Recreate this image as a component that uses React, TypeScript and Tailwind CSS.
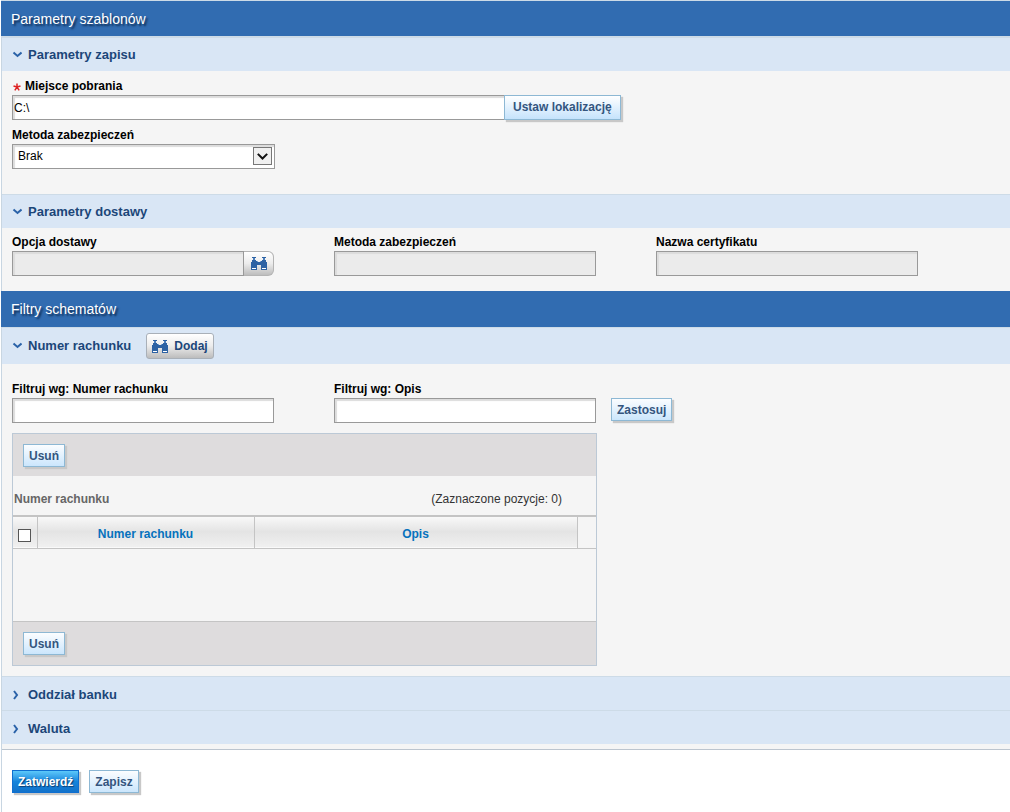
import { useState } from "react";
import type { ReactNode } from "react";

const inputStyle =
  "block h-[25px] border border-[#999] px-px text-[12px] text-black outline-none shadow-[inset_2px_2px_1px_#dcdcdc]";

function Binoculars() {
  return (
    <svg width="16" height="13" viewBox="0 0 16 13" shapeRendering="crispEdges" aria-hidden="true">
      <path fill="#2d62a3" d="M1 0h4v1H1zM11 0h4v1h-4z" />
      <path fill="#4a7dbb" d="M2 1h2v2H2zM12 1h2v2h-2z" />
      <path fill="#2d62a3" d="M1 3h4v1h1v1h4V4h1V3h4v2h1v8h-6V8H6v5H0V5h1z" />
      <path fill="#7ea6d4" d="M6 4h1v1H6zM9 4h1v1H9z" />
      <path fill="#fff" d="M1 11h4v1H1zM11 11h4v1h-4z" />
    </svg>
  );
}

function Chevron({ open }: { open: boolean }) {
  return (
    <svg width="10" height="10" viewBox="0 0 10 10" fill="none" stroke="#2a62a8" strokeWidth="2" aria-hidden="true">
      {open ? <path d="M1.500 2.500l4 3.500 4-3.500" /> : <path d="M2 1l3 4-3 4" />}
    </svg>
  );
}

function Title({ children }: { children: string }) {
  return (
    <h1 className="flex h-9 items-center bg-[#316cb1] pl-[10px] text-[14px] text-white [text-shadow:2px_2px_2px_#0c2a50]">
      {children}
    </h1>
  );
}

interface SectionBarProps {
  title: string;
  open: boolean;
  onToggle: () => void;
  children?: ReactNode;
}

function SectionBar({ title, open, onToggle, children }: SectionBarProps) {
  return (
    <div className="flex min-h-[34px] items-center gap-[15px] border-t border-[#cddbe7] bg-[#d9e6f5] pl-[10px]">
      <button
        type="button"
        aria-expanded={open}
        onClick={onToggle}
        className={`flex items-center gap-[6px] text-[13px] leading-4 font-bold text-[#1c4679] ${open ? "" : "pt-[3px]"}`}
      >
        <Chevron open={open} />
        {title}
      </button>
      {children}
    </div>
  );
}

function SmallButton({ children, primary }: { children: string; primary?: boolean }) {
  return (
    <button
      type="button"
      className={
        primary
          ? "h-[23px] border border-[#0f6fd0] bg-linear-to-b from-[#5cc8fa] via-[#1485dc] to-[#1272ca] px-[5px] pt-px text-[12px] font-bold text-white shadow-[2px_2px_1px_#c8c8c8] [text-shadow:1px_1px_1px_#0c3c70]"
          : "h-[23px] border border-[#8db8d4] bg-linear-to-b from-[#fbfdff] to-[#cbe6fc] px-[5px] pt-px text-[12px] font-bold text-[#34557e] shadow-[2px_2px_1px_#c8c8c8]"
      }
    >
      {children}
    </button>
  );
}

interface FieldProps {
  id: string;
  label: string;
  disabled?: boolean;
}

function Field({ id, label, disabled }: FieldProps) {
  return (
    <div className="w-[262px]">
      <label htmlFor={id} className="mb-px block">
        {label}
      </label>
      <input
        id={id}
        type="text"
        disabled={disabled}
        className={`${inputStyle} w-full ${disabled ? "bg-[#ebebeb]" : "bg-white"}`}
      />
    </div>
  );
}

function App() {
  const [location, setLocation] = useState("C:\\");
  const [open, setOpen] = useState({
    save: true,
    delivery: true,
    account: true,
    branch: false,
    currency: false,
  });

  const toggle = (key: keyof typeof open) => {
    setOpen({ ...open, [key]: !open[key] });
  };

  return (
    <div className="ml-px min-h-screen border-l border-[#c8d6e2] bg-white font-['Liberation_Sans',Arial,sans-serif] text-[12px] leading-4 text-[#333]">
      <main className="border-b border-[#bcc5cf] bg-[#f5f5f5] pb-[5px]">
        <div className="-ml-px border-y border-[#cddbe7] [&>h1]:h-[35px]">
          <Title>Parametry szablonów</Title>
        </div>
        <SectionBar title="Parametry zapisu" open={open.save} onToggle={() => toggle("save")} />
        {open.save && (
          <div className="px-[10px] pt-[7px] pb-[25px] font-bold text-black">
            <label htmlFor="location" className="mb-px flex items-center">
              <svg width="9" height="8" viewBox="0 0 9 8" className="mt-px mr-1" fill="none" stroke="#d22" strokeWidth="1.500" aria-hidden="true">
                <path d="M5 .5v3.500M1.500 3l3.500 1 3.500-1M2.800 7.300L5 4l2.200 3.300" />
              </svg>
              Miejsce pobrania
            </label>
            <div className="flex">
              <input
                id="location"
                type="text"
                value={location}
                onChange={(e) => setLocation(e.target.value)}
                className={`${inputStyle} w-[492px] border-r-0 bg-white font-normal`}
              />
              <button
                type="button"
                className="h-[25px] border border-[#8db8d4] bg-linear-to-b from-white to-[#c5e3fc] px-2 pb-px text-[12px] text-[#34557e] shadow-[2px_2px_1px_#c8c8c8]"
              >
                Ustaw lokalizację
              </button>
            </div>
            <label htmlFor="security" className="mt-[7px] mb-px block">
              Metoda zabezpieczeń
            </label>
            <div className="relative w-[263px]">
              <select
                id="security"
                className={`${inputStyle} w-full appearance-none bg-white pb-px pl-[5px] font-normal`}
              >
                <option>Brak</option>
              </select>
              <span className="pointer-events-none absolute top-[3px] right-[3px] flex h-[18px] w-[19px] items-center justify-center border border-[#777] bg-[#f0f0f0]">
                <svg width="11" height="7" viewBox="0 0 11 7" fill="none" stroke="#111" strokeWidth="2" aria-hidden="true">
                  <path d="M.8 .9l4.7 4.600L10.200.9" />
                </svg>
              </span>
            </div>
          </div>
        )}

        <SectionBar title="Parametry dostawy" open={open.delivery} onToggle={() => toggle("delivery")} />
        {open.delivery && (
          <div className="flex flex-wrap gap-x-[60px] gap-y-2 px-[10px] pt-[6px] pb-[15px] font-bold text-black">
            <div className="w-[262px]">
              <label htmlFor="option" className="mb-px block">
                Opcja dostawy
              </label>
              <div className="flex">
                <input
                  id="option"
                  type="text"
                  disabled
                  className={`${inputStyle} min-w-0 flex-1 bg-[#ebebeb]`}
                />
                <button
                  type="button"
                  aria-label="Opcja dostawy"
                  className="flex h-[25px] w-[30px] items-center justify-center rounded-r-md border border-l-0 border-[#b4b4b4] bg-linear-to-b from-white via-[#ececec] to-[#bdbdbd]"
                >
                  <Binoculars />
                </button>
              </div>
            </div>
            <Field id="delivery-security" label="Metoda zabezpieczeń" disabled />
            <Field id="certificate" label="Nazwa certyfikatu" disabled />
          </div>
        )}

        <div className="-ml-px">
          <Title>Filtry schematów</Title>
        </div>
        <SectionBar title="Numer rachunku" open={open.account} onToggle={() => toggle("account")}>
          <button
            type="button"
            className="my-[5px] flex h-[26px] items-center gap-[6px] rounded-[3px] border border-[#a9b0b8] bg-linear-to-b from-white via-[#ececec] to-[#bdbdbd] px-[5px] text-[12px] font-bold text-[#1c4679]"
          >
            <Binoculars />
            Dodaj
          </button>
        </SectionBar>
        {open.account && (
          <div className="px-[10px] pt-[17px] pb-[10px]">
            <div className="flex items-end font-bold text-black">
              <Field id="filter-number" label="Filtruj wg: Numer rachunku" />
              <div className="ml-[60px]">
                <Field id="filter-description" label="Filtruj wg: Opis" />
              </div>
              <div className="mb-[2px] ml-[15px]">
                <SmallButton>Zastosuj</SmallButton>
              </div>
            </div>

            <div className="mt-[10px] w-[585px] border border-[#bcc9d6]">
              <div className="flex h-[42px] items-center bg-[#dedcdd] px-[10px]">
                <SmallButton>Usuń</SmallButton>
              </div>
              <div className="flex h-[39px] items-center justify-between pt-[6px] pr-[34px] pl-px">
                <h2 className="font-bold text-[#666]">Numer rachunku</h2>
                <span>(Zaznaczone pozycje: 0)</span>
              </div>
              <table className="w-full table-fixed border-collapse border-t-2 border-[#c4c4c4]">
                <thead>
                  <tr className="h-8 border-b border-[#c4c4c4] bg-linear-to-b from-[#fafafa] via-[#e4e4e4] to-[#f0f0f0] text-[#0672bd]">
                    <th className="w-6 border-r border-[#c4c4c4] pt-[6px]">
                      <input
                        type="checkbox"
                        aria-label="Zaznacz wszystkie"
                        className="mx-auto block h-[13px] w-[13px] appearance-none border border-[#555] bg-white checked:bg-[#316cb1]"
                      />
                    </th>
                    <th className="w-[217px] border-r border-[#c4c4c4] pt-[3px]">Numer rachunku</th>
                    <th className="w-[323px] border-r border-[#c4c4c4] pt-[3px]">Opis</th>
                    <th className="bg-[#f5f5f5]"></th>
                  </tr>
                </thead>
                <tbody>
                  <tr className="h-[73px] border-b border-[#c4c4c4]">
                    <td colSpan={4}></td>
                  </tr>
                </tbody>
              </table>
              <div className="flex h-[43px] items-center bg-[#dedcdd] px-[10px]">
                <SmallButton>Usuń</SmallButton>
              </div>
            </div>
          </div>
        )}
        <SectionBar title="Oddział banku" open={open.branch} onToggle={() => toggle("branch")} />
        <SectionBar title="Waluta" open={open.currency} onToggle={() => toggle("currency")} />
      </main>

      <footer className="flex gap-[10px] px-[10px] pt-5">
        <SmallButton primary>Zatwierdź</SmallButton>
        <SmallButton>Zapisz</SmallButton>
      </footer>
    </div>
  );
}

export default App;
